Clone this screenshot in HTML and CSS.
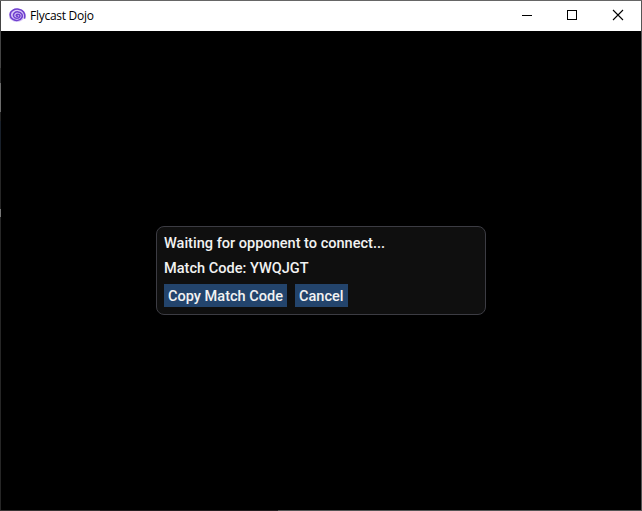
FILE: index.html
```html
<!DOCTYPE html>
<html lang="en">
<head>
<meta charset="utf-8">
<title>Flycast Dojo</title>
<link rel="stylesheet" href="styles.css">
</head>
<body>
<div class="window">
  <header class="titlebar">
    <svg class="logo" width="17" height="16" viewBox="0.6 0 16 16" preserveAspectRatio="none" fill="none" stroke-linecap="round">
      <ellipse cx="8" cy="7.3" rx="7.6" ry="6.7" fill="#d9c8f7"/>
      <path d="M8.8 8.2C7.4 8.8 6.9 7.2 8 6.5C9.6 5.6 11.3 7 10.8 8.4C10 10.8 6.2 11 5.1 8.5C4 5.6 6.6 3.6 9.2 3.9C12.2 4.3 13.8 7 12.8 9.4C11.4 12.7 6.8 13.4 4 11.2C.8 8.7 1 4.4 4.1 2.4C7.3 .2 12.2 .8 14.3 4C15.5 5.8 15.8 7.8 15.3 10" stroke="#7040cf" stroke-width="1.5"/>
    </svg>
    <h1 class="title">Flycast Dojo</h1>
    <div class="controls">
      <svg width="45" height="30" viewBox="0 0 45 30" shape-rendering="crispEdges"><path d="M17 14.5h10" stroke="#000"/></svg>
      <svg width="46" height="30" viewBox="0 0 46 30" shape-rendering="crispEdges"><path d="M17.5 9.5h9v9h-9z" stroke="#000" fill="none"/></svg>
      <svg width="46" height="30" viewBox="0 0 46 30"><path d="M17 9l10 10M27 9l-10 10" stroke="#000" stroke-width="1.1"/></svg>
    </div>
  </header>
  <main class="screen">
    <section class="dialog">
      <p class="line">Waiting for opponent to connect...</p>
      <p class="line">Match Code: YWQJGT</p>
      <div class="actions">
        <button class="button" type="button">Copy Match Code</button>
        <button class="button" type="button">Cancel</button>
      </div>
    </section>
  </main>
</div>
</body>
</html>
```
FILE: styles.css
```css
* { box-sizing: border-box; }

body {
  margin: 0;
  width: 642px;
  height: 511px;
  padding: 1px;
  overflow: hidden;
  background:
    linear-gradient(#666, #666) top / 100% 1px no-repeat,
    linear-gradient(#555, #555) right / 1px 100% no-repeat,
    linear-gradient(90deg, #383434 0 100px, #241e20 100px 278px, #555 278px) bottom / 100% 1px no-repeat,
    linear-gradient(#444 0 68px, #303030 68px 83px, #6c6c6c 83px 112px, #242424 112px 121px, #18202b 121px 150px, #262626 150px 209px, #777 209px 217px, #262626 217px) left / 1px 100% no-repeat;
}

.window {
  display: flex;
  flex-direction: column;
  width: 640px;
  height: 509px;
}

.titlebar {
  display: flex;
  align-items: center;
  height: 30px;
  padding-left: 8px;
  background: #fff;
}

.title {
  margin: 0 0 0 4px;
  font: 400 12px/16px "Open Sans", "Noto Sans", sans-serif;
  letter-spacing: -0.27px;
  color: #000;
}

.controls {
  display: flex;
  margin-left: auto;
  margin-right: -1px;
}

.screen {
  flex: 1;
  display: flex;
  align-items: center;
  justify-content: center;
  background: #000;
}

.dialog {
  width: 330px;
  height: 89px;
  padding: 8px 7px 7px;
  border: 1px solid #3c3c43;
  border-radius: 8px;
  background: #0f0f0f;
  font: 500 14.55px/17px Roboto, sans-serif;
  color: #f2f2f2;
}

.line { margin: 0 0 8px; }

.actions {
  display: flex;
  gap: 8px;
  margin-top: -1px;
}

.button {
  height: 23px;
  padding: 1px 4px 0;
  border: 0;
  background: #23446c;
  color: inherit;
  font: inherit;
}
```
